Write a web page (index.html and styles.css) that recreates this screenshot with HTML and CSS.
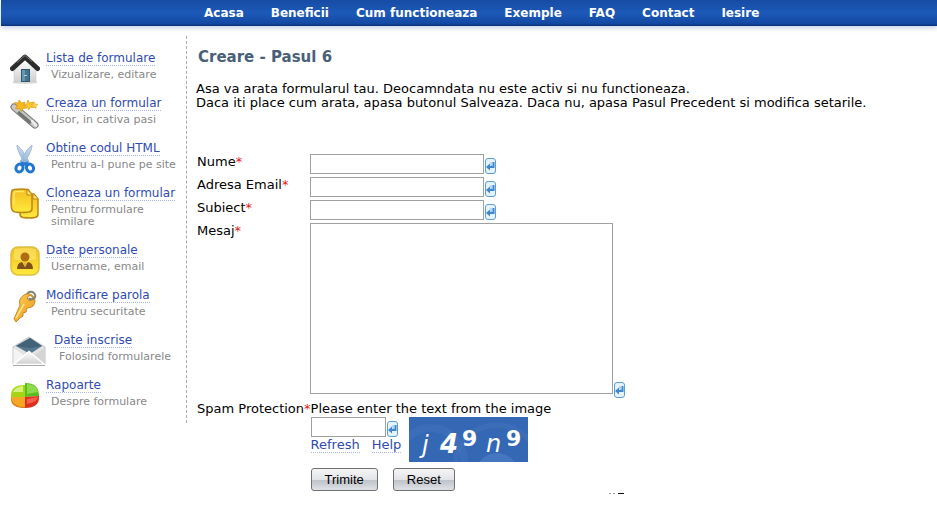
FILE: index.html
```html
<!DOCTYPE html>
<html lang="ro">
    <head>
        <meta charset="utf-8">
        <meta name="viewport" content="width=device-width, initial-scale=1.0">
        <title>Creare - Pasul 6</title>
        <link rel="stylesheet" href="styles.css">
    </head>
    <body>
        <svg class="defs" width="0" height="0" aria-hidden="true">
            <defs>
                <linearGradient id="gold" x1="0" y1="0" x2="0" y2="1">
                    <stop offset="0" stop-color="#f3bd20"/>
                    <stop offset="1" stop-color="#ffe93c"/>
                </linearGradient>
                <linearGradient id="wall" x1="0" y1="0" x2="0" y2="1">
                    <stop offset="0" stop-color="#ffffff"/>
                    <stop offset="1" stop-color="#cfcfcf"/>
                </linearGradient>
                <linearGradient id="keyfill" x1="0" y1="0" x2="1" y2="1">
                    <stop offset="0" stop-color="#ffd055"/>
                    <stop offset="1" stop-color="#e9961c"/>
                </linearGradient>
                <linearGradient id="blade" x1="0" y1="0" x2="0" y2="1">
                    <stop offset="0" stop-color="#d3e2f1"/>
                    <stop offset="1" stop-color="#84abd6"/>
                </linearGradient>
                <symbol id="enter" viewBox="0 0 11 16">
                    <rect x="0.5" y="0.5" width="10" height="15" rx="2.5" fill="#e4f3fe" stroke="#5b9fd8"/>
                    <path d="M8.500 4v5H3.500" fill="none" stroke="#3f86cc" stroke-width="2"/>
                    <path d="M1 9l4-3.500v7z" fill="#3f86cc"/>
                    <path d="M6 4v3.500h1" fill="none" stroke="#8dbce6"/>
                </symbol>
            </defs>
        </svg>

        <nav class="topnav">
            <a href="#">Acasa</a>
            <a href="#">Beneficii</a>
            <a href="#">Cum functioneaza</a>
            <a href="#">Exemple</a>
            <a href="#">FAQ</a>
            <a href="#">Contact</a>
            <a href="#">Iesire</a>
        </nav>

        <div class="page">
            <ul class="sidebar">
                <li>
                    <svg class="icon" viewBox="0 0 30 32" aria-hidden="true">
                        <ellipse cx="15" cy="29.500" rx="13" ry="1.500" fill="#dddddd"/>
                        <path d="M4 15L15 6l11 9v14H4z" fill="url(#wall)" stroke="#c4c4c4" stroke-width="0.500"/>
                        <rect x="11.500" y="16.500" width="8" height="12" fill="#44748f" stroke="#2f566c"/>
                        <path d="M12 17h3v11h-3z" fill="#6795ae"/>
                        <path d="M14 22.500h3" stroke="#b9d3e0"/>
                        <path d="M2.500 15.500L15 4l12.500 11.500" fill="none" stroke="#2c2c2c" stroke-width="5" stroke-linecap="round" stroke-linejoin="round"/>
                        <path d="M7 9.500L15 2.500l7 6" fill="none" stroke="#777777" stroke-width="1"/>
                    </svg>
                    <div><a href="#">Lista de formulare</a><p>Vizualizare, editare</p></div>
                </li>
                <li>
                    <svg class="icon" viewBox="0 0 30 32" aria-hidden="true">
                        <path d="M4 9l21 18" stroke="#777777" stroke-width="7" stroke-linecap="round"/>
                        <path d="M4 9l21 18" stroke="#c9c9c9" stroke-width="5" stroke-linecap="round"/>
                        <path d="M8 14l13 11" stroke="#6f7670" stroke-width="3"/>
                        <path d="M22 23l4 4.500" stroke="#eeeeee" stroke-width="2.500" stroke-linecap="round"/>
                        <path d="M9 2l2.500 3L15 4l-1 3.500 3 2.500-4 .5-1.500 3-2-3-4 .5 1.500-3.500-2.500-3 4 .5z" fill="#f7b81c" stroke="#dc970c" stroke-width="0.700"/>
                        <path d="M18 2l1.500 3 4-1-1.500 3 2.500 2.500-4-.5-2 3-1-3.500-3.500-1 3-2z" fill="#ffc62a" stroke="#df9a10" stroke-width="0.700"/>
                        <path d="M24 4l1 2 3 .5-2 1.500 0 2.500-2-1.500-2.500.5 1-2.500z" fill="#ffd04b" stroke="#e2a420" stroke-width="0.600"/>
                    </svg>
                    <div><a href="#">Creaza un formular</a><p>Usor, in cativa pasi</p></div>
                </li>
                <li>
                    <svg class="icon" viewBox="0 0 30 32" aria-hidden="true">
                        <path d="M7 2c0 5 4 12 9 20l3-3C16 13 12 6 7 2z" fill="url(#blade)" stroke="#9db9d6"/>
                        <path d="M22 2c0 5-4 12-9 20l-3-3C13 13 17 6 22 2z" fill="url(#blade)" stroke="#9db9d6"/>
                        <path d="M11 20l7 2M18 20l-7 2" stroke="#2b7bd0" stroke-width="3"/>
                        <ellipse cx="9.500" cy="25" rx="3.500" ry="4" fill="#ffffff" stroke="#2277d0" stroke-width="3" transform="rotate(25 9.500 25)"/>
                        <ellipse cx="20" cy="25" rx="3.500" ry="4" fill="#ffffff" stroke="#2277d0" stroke-width="3" transform="rotate(-25 20 25)"/>
                    </svg>
                    <div><a href="#">Obtine codul HTML</a><p>Pentru a-l pune pe site</p></div>
                </li>
                <li>
                    <svg class="icon" viewBox="0 0 30 32" aria-hidden="true">
                        <path d="M12 6h12l4 5v15q0 3-3 3.500-6 1-12 0-3-.5-3-3.500z" fill="url(#gold)" stroke="#bd8712" stroke-width="1.500"/>
                        <path d="M23 6v5h5" fill="#ffe873" stroke="#bd8712"/>
                        <path d="M4 1.500q8-1 14 0l4 5v14q0 3-3 3.500-7 1-14 0-3-.5-3.500-4-1-8 0-15Q1.500 2 4 1.500z" fill="url(#gold)" stroke="#bd8712" stroke-width="1.500"/>
                        <path d="M17 2v5h5" fill="#ffe873" stroke="#bd8712"/>
                        <path d="M4 17V5q0-1.500 2-1.500h8" fill="none" stroke="#ffe76b" stroke-width="1.500"/>
                    </svg>
                    <div><a href="#">Cloneaza un formular</a><p>Pentru formulare<br>similare</p></div>
                </li>
                <li>
                    <svg class="icon" viewBox="0 0 30 32" aria-hidden="true">
                        <rect x="1" y="2" width="28" height="28" rx="7" fill="url(#gold)" stroke="#dcc044" stroke-width="1.500"/>
                        <path d="M4 4q11-2 22 0v10q-11 3-22 0z" fill="#fff48b" opacity="0.450"/>
                        <circle cx="15" cy="12" r="4.500" fill="#b06c12"/>
                        <path d="M7 24q0-6 5-7l3 4 3-4q5 1 5 7z" fill="#80501a"/>
                        <path d="M12.500 17.500l2.500 5 2.500-5z" fill="#e4b33a"/>
                    </svg>
                    <div><a href="#">Date personale</a><p>Username, email</p></div>
                </li>
                <li>
                    <svg class="icon" viewBox="0 0 30 32" aria-hidden="true">
                        <path d="M14 5q5-3 9 1 4 5 0 10-2 2-6 2l-1 4-3 1v3l-3 2-4 4-2-3 6-14Q8 9 14 5z" fill="url(#keyfill)" stroke="#c98922"/>
                        <circle cx="20" cy="8" r="2.500" fill="#ffffff" stroke="#b8811f"/>
                        <path d="M14 14L6 28" stroke="#ffe88a" stroke-width="1.500"/>
                        <path d="M17 4q3-4 7-1 3 4-1 6-3 1-4-1" fill="none" stroke="#7d8277" stroke-width="2"/>
                    </svg>
                    <div><a href="#">Modificare parola</a><p>Pentru securitate</p></div>
                </li>
                <li>
                    <svg class="icon icon-wide" viewBox="0 0 34 32" aria-hidden="true">
                        <path d="M1 12L17 2l16 10v18H1z" fill="#e2e2e2" stroke="#c4c4c4"/>
                        <path d="M4 11l14-8 12 8-12 8z" fill="#55788f"/>
                        <path d="M4 11l14-8 12 8-12 2z" fill="#426278"/>
                        <path d="M1.500 13L13 21 1.500 29z" fill="#f4f4f4"/>
                        <path d="M32.500 13L21 21l11.500 8z" fill="#d5d5d5"/>
                        <path d="M1.500 29.500L17 16.500l15.500 13z" fill="url(#wall)" stroke="#ffffff" stroke-width="1.500"/>
                        <path d="M1 30.500h32" stroke="#a8a8a8"/>
                    </svg>
                    <div><a href="#">Date inscrise</a><p>Folosind formularele</p></div>
                </li>
                <li>
                    <svg class="icon" viewBox="0 0 30 32" aria-hidden="true">
                        <path d="M1 16v4q1 8 14 8V16z" fill="#d97c12"/>
                        <path d="M15 17V5Q2 5 1 14v4h14z" fill="#a5d615"/>
                        <path d="M1 17h14v10Q2 27 1 17z" fill="#f5a624"/>
                        <path d="M3 12Q5 7 13 6v6z" fill="#d8f17c"/>
                        <path d="M15 17V3q14 0 14 13z" fill="#58bd1e"/>
                        <path d="M17 14V4q9 0 11 8z" fill="#8fda4c"/>
                        <path d="M15 17l14-1q1 12-14 12z" fill="#dc2f1d"/>
                        <path d="M17 19l11-2q0 5-11 7z" fill="#f4604c"/>
                    </svg>
                    <div><a href="#">Rapoarte</a><p>Despre formulare</p></div>
                </li>
            </ul>

            <div class="content">
                <h1>Creare - Pasul 6</h1>
                <p class="intro">Asa va arata formularul tau. Deocamndata nu este activ si nu functioneaza.<br>
                Daca iti place cum arata, apasa butonul Salveaza. Daca nu, apasa Pasul Precedent si modifica setarile.</p>

                <form>
                    <div class="row">
                        <label for="nume">Nume<span class="req">*</span></label>
                        <input type="text" id="nume" name="nume">
                        <svg class="enter" aria-hidden="true"><use href="#enter"/></svg>
                    </div>
                    <div class="row">
                        <label for="email">Adresa Email<span class="req">*</span></label>
                        <input type="text" id="email" name="email">
                        <svg class="enter" aria-hidden="true"><use href="#enter"/></svg>
                    </div>
                    <div class="row">
                        <label for="subiect">Subiect<span class="req">*</span></label>
                        <input type="text" id="subiect" name="subiect">
                        <svg class="enter" aria-hidden="true"><use href="#enter"/></svg>
                    </div>
                    <div class="row">
                        <label for="mesaj">Mesaj<span class="req">*</span></label>
                        <textarea id="mesaj" name="mesaj"></textarea>
                        <svg class="enter" aria-hidden="true"><use href="#enter"/></svg>
                    </div>
                    <div class="row spam">
                        <label for="captcha">Spam Protection<span class="req">*</span></label>
                        <div>
                            <div class="hint">Please enter the text from the image</div>
                            <div class="captcha">
                                <div>
                                    <div class="code">
                                        <input type="text" id="captcha" name="captcha">
                                        <svg class="enter" aria-hidden="true"><use href="#enter"/></svg>
                                    </div>
                                    <div class="links"><a href="#">Refresh</a><a href="#">Help</a></div>
                                </div>
                                <svg class="captcha-image" viewBox="0 0 119 45">
                                    <rect width="119" height="45" fill="#3568b4"/>
                                    <circle cx="22" cy="44" r="33" fill="none" stroke="#4a7bc4" stroke-width="8" opacity="0.300"/>
                                    <circle cx="88" cy="58" r="22" fill="#5686cb" opacity="0.500"/>
                                    <circle cx="88" cy="50" r="42" fill="none" stroke="#4576c0" stroke-width="5" opacity="0.400"/>
                                    <text x="13" y="36" class="thin">j</text>
                                    <text x="31" y="36" class="fat slant">4</text>
                                    <text x="53" y="29" class="fat">9</text>
                                    <text x="77" y="35" class="thin">n</text>
                                    <text x="97" y="29" class="fat">9</text>
                                </svg>
                            </div>
                            <div class="buttons">
                                <button type="submit">Trimite</button>
                                <button type="reset">Reset</button>
                            </div>
                        </div>
                    </div>
                </form>
                <svg class="scrap" viewBox="0 0 18 2" aria-hidden="true">
                    <path d="M2 0.500h2M6 0.500h2" stroke="#999999"/>
                    <path d="M11 0.500h6" stroke="#111111"/>
                </svg>
            </div>
        </div>
    </body>
</html>
```
FILE: styles.css
```css
* {
    box-sizing: border-box;
}

body {
    margin: 0;
    background: #fff;
    color: #000;
    font: 13px/14px Verdana, "DejaVu Sans", sans-serif;
}

.defs {
    display: block;
}

.topnav {
    display: flex;
    gap: 27px;
    height: 26px;
    margin-left: 1px;
    padding-left: 203px;
    background: linear-gradient(#174ca5, #1d59b8 50%, #1349a3 90%, #0a3177);
    box-shadow: 0 2px 5px #c5cfe8;
    font-size: 12px;
    font-weight: bold;
    line-height: 26px;
}

.topnav a {
    color: #fff;
    text-decoration: none;
    white-space: nowrap;
}

.page {
    display: flex;
    align-items: flex-start;
    padding-top: 10px;
}

.sidebar {
    flex: 0 0 187px;
    margin: 0;
    padding: 15px 0 0 10px;
    border-right: 1px dashed #aaa;
    list-style: none;
}

.sidebar li {
    display: flex;
    gap: 6px;
    padding-bottom: 15px;
}

.icon {
    flex: none;
    width: 30px;
    height: 32px;
    margin: 2px 0 -4px;
}

.icon-wide {
    width: 38px;
}

.sidebar a,
.links a {
    border-bottom: 1px dotted #a9b5e2;
    color: #2f4bb0;
    text-decoration: none;
}

.sidebar a {
    font-size: 12px;
}

.sidebar p {
    margin: 4px 0 0 5px;
    color: #888;
    font-size: 11px;
    line-height: 12px;
    white-space: nowrap;
}

.content {
    flex: 1;
    padding: 12px 0 0 9px;
}

h1 {
    margin: 0 0 16px 2px;
    color: #4a6078;
    font-size: 15px;
    line-height: 18px;
}

.intro {
    margin: 0 0 44px;
}

.row {
    display: flex;
    align-items: flex-end;
    margin-bottom: 3px;
    padding-left: 1px;
}

.row label {
    flex: 0 0 113px;
    align-self: flex-start;
    line-height: 16px;
    white-space: nowrap;
}

.req {
    color: #e02020;
}

input,
textarea {
    display: block;
    margin: 0;
    border: 1px solid #a0a0a0;
    background: #fff;
    font: inherit;
}

input {
    width: 174px;
    height: 20px;
}

textarea {
    width: 303px;
    height: 171px;
    resize: none;
}

.enter {
    flex: none;
    width: 11px;
    height: 16px;
    margin-left: 1px;
}

textarea + .enter {
    margin-bottom: -4px;
}

.spam {
    padding-top: 4px;
}

.hint {
    line-height: 16px;
}

.captcha {
    display: flex;
    gap: 8px;
}

.code {
    display: flex;
    align-items: flex-end;
}

.code input {
    width: 75px;
    height: 20px;
}

.links {
    display: flex;
    gap: 12px;
    padding-top: 1px;
}

.captcha-image {
    width: 119px;
    height: 45px;
}

.captcha-image text {
    fill: #fff;
    font-family: "DejaVu Sans", sans-serif;
}

.captcha-image .thin {
    font-size: 24px;
    font-style: italic;
}

.captcha-image .fat {
    font-size: 22px;
    font-weight: bold;
}

.captcha-image .slant {
    font-size: 26px;
    font-style: italic;
}

.buttons {
    display: flex;
    gap: 15px;
    padding-top: 6px;
}

button {
    height: 23px;
    padding: 0 13px;
    border: 1px solid #707070;
    border-radius: 3px;
    background: linear-gradient(#f4f5f6, #e2e4e7 50%, #bfc4cb 55%, #dfe2e6);
    color: #000;
    font: 13px "Liberation Sans", Arial, sans-serif;
}

.scrap {
    display: block;
    width: 18px;
    height: 2px;
    margin: -1px 0 0 411px;
}
```
